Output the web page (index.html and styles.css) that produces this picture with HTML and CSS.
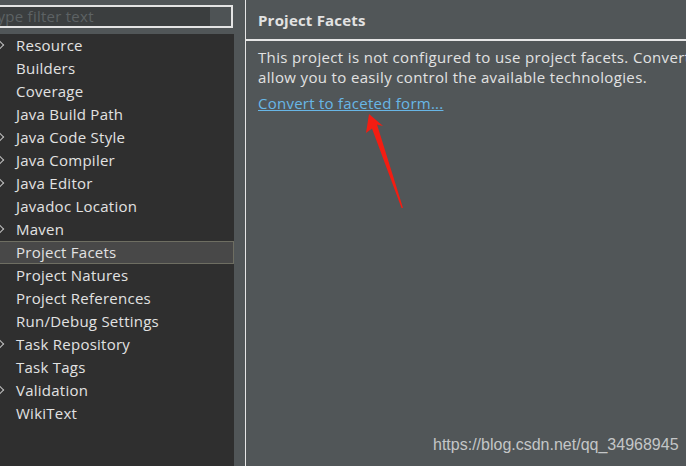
FILE: index.html
```html
<!DOCTYPE html>
<html>
<head>
<meta charset="utf-8">
<link rel="stylesheet" href="styles.css">
</head>
<body>
<div class="left">
  <div class="filter">
    <span class="placeholder">type filter text</span>
    <span class="filter-btn"></span>
  </div>
  <ul class="tree">
    <li class="exp">Resource</li>
    <li>Builders</li>
    <li>Coverage</li>
    <li>Java Build Path</li>
    <li class="exp">Java Code Style</li>
    <li class="exp">Java Compiler</li>
    <li class="exp">Java Editor</li>
    <li>Javadoc Location</li>
    <li class="exp">Maven</li>
    <li class="sel">Project Facets</li>
    <li>Project Natures</li>
    <li>Project References</li>
    <li>Run/Debug Settings</li>
    <li class="exp">Task Repository</li>
    <li>Task Tags</li>
    <li class="exp">Validation</li>
    <li>WikiText</li>
  </ul>
</div>
<div class="sep"></div>
<div class="right">
  <div class="header">Project Facets</div>
  <div class="content">
    <p class="msg">This project is not configured to use project facets. Converting to faceted form will<br>allow you to easily control the available technologies.</p>
    <a class="link">Convert to faceted form...</a>
  </div>
  <div class="watermark">https://blog.csdn.net/qq_34968945</div>
</div>
<svg class="arrow" width="60" height="110" viewBox="0 0 60 110">
  <polygon points="7,4 21,16 15,14.5 41,98 39.5,98 10,18.5 4,23" fill="#f31d12"/>
</svg>
</body>
</html>
```
FILE: styles.css
```css
html, body {
  margin: 0;
  padding: 0;
}
body {
  width: 686px;
  height: 466px;
  overflow: hidden;
  background: #515658;
  display: flex;
  font-family: "Open Sans", "Noto Sans", "Noto Sans CJK SC", sans-serif;
  font-size: 15px;
  letter-spacing: 0.25px;
  color: #e2e2e2;
  position: relative;
}
.left {
  width: 234px;
  display: flex;
  flex-direction: column;
  flex-shrink: 0;
}
.filter {
  margin: 5px 1px 0 -4px;
  height: 19px;
  border: 2px solid #e4e4e4;
  background: #3b3e3f;
  display: flex;
  align-items: center;
  overflow: hidden;
}
.placeholder {
  flex: 1;
  color: #5d6264;
  white-space: nowrap;
  margin-left: -6px;
  line-height: 19px;
}
.filter-btn {
  width: 21px;
  height: 19px;
  background: #4e5355;
}
.tree {
  list-style: none;
  margin: 6px 0 0 0;
  padding: 0;
  flex: 1;
  background: #2f2f2f;
}
.tree li {
  height: 23px;
  line-height: 22px;
  padding-left: 16px;
  position: relative;
  box-sizing: border-box;
  white-space: nowrap;
}
.tree li.exp::before {
  content: "";
  position: absolute;
  left: -3px;
  top: 8px;
  width: 5px;
  height: 5px;
  border-top: 1px solid #bdbdbd;
  border-right: 1px solid #bdbdbd;
  transform: rotate(45deg);
}
.tree li.sel {
  background: #484848;
  border: 1px solid #6e6e62;
  border-left: none;
  line-height: 20px;
}
.sep {
  width: 11px;
  flex-shrink: 0;
  border-right: 1px solid #e6e6e6;
}
.right {
  flex: 1;
  display: flex;
  flex-direction: column;
  position: relative;
  overflow: hidden;
}
.header {
  height: 39px;
  border-bottom: 2px solid #e6e6e6;
  font-weight: bold;
  padding-left: 12px;
  line-height: 40px;
  letter-spacing: 0.2px;
}
.content {
  padding: 6px 0 0 12px;
}
.msg {
  margin: 0;
  line-height: 20px;
  white-space: nowrap;
  letter-spacing: 0.35px;
}
.link {
  display: inline-block;
  margin-top: 6px;
  color: #68b6e6;
  text-decoration: underline;
  line-height: 20px;
}
.watermark {
  position: absolute;
  left: 187px;
  top: 436px;
  font-family: "Liberation Sans", Arial, sans-serif;
  font-size: 16px;
  letter-spacing: 0;
  color: #c4c6c7;
}
.arrow {
  position: absolute;
  left: 362px;
  top: 110px;
}
```
